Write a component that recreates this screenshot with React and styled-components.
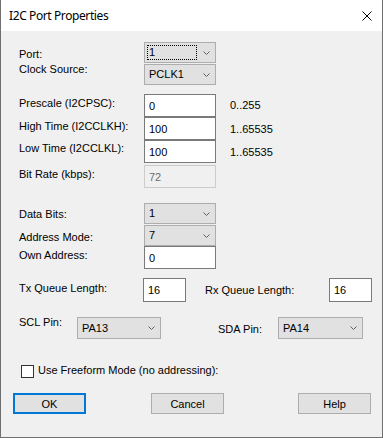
import React from 'react'
import styled, { createGlobalStyle } from 'styled-components';

const GlobalStyle = createGlobalStyle`
  body {
    margin: 0;
    background: #ffffff;
    font-family: "Liberation Sans", Arial, sans-serif;
  }
  * { box-sizing: border-box; }
`;

const Chevron = () => (
  <svg width="7" height="4" viewBox="0 0 7 4">
    <path d="M0.5 0.5 L3.5 3.5 L6.5 0.5" fill="none" stroke="#606060" strokeWidth="1" />
  </svg>
);

const CloseIcon = () => (
  <svg width="10" height="10" viewBox="0 0 10 10">
    <path d="M0.5 0.5 L9.5 9.5 M9.5 0.5 L0.5 9.5" stroke="#000" strokeWidth="1" />
  </svg>
);

const ComboBox = ({ value, width, height = 21, focus }) => (
  <Combo $w={width} $h={height} $focus={focus}>
    <ComboValue $focus={focus}>{value}</ComboValue>
    <Chevron />
  </Combo>
);

const App = () => {
  return (
    <>
      <GlobalStyle />
      <Window>
        <TitleBar>
          <Title>I2C Port Properties</Title>
          <CloseIcon />
        </TitleBar>
        <Body>
          <Row>
            <Label $w={125} $mt={6}>Port:</Label>
            <ComboBox value="1" width={72} focus />
          </Row>
          <Row $mt={1}>
            <Label $w={125} $mt={-1}>Clock Source:</Label>
            <ComboBox value="PCLK1" width={72} />
          </Row>

          <Row $mt={9}>
            <Label $w={125} $mt={3}>Prescale (I2CPSC):</Label>
            <TextBox $w={72} readOnly defaultValue="0" />
            <Hint $mt={5}>0..255</Hint>
          </Row>
          <Row>
            <Label $w={125} $mt={3}>High Time (I2CCLKH):</Label>
            <TextBox $w={72} readOnly defaultValue="100" />
            <Hint $mt={6}>1..65535</Hint>
          </Row>
          <Row>
            <Label $w={125} $mt={2}>Low Time (I2CCLKL):</Label>
            <TextBox $w={72} readOnly defaultValue="100" />
            <Hint $mt={6}>1..65535</Hint>
          </Row>
          <Row $mt={2}>
            <Label $w={125} $mt={3}>Bit Rate (kbps):</Label>
            <TextBox $w={72} disabled defaultValue="72" />
          </Row>

          <Row $mt={15}>
            <Label $w={125} $mt={5}>Data Bits:</Label>
            <ComboBox value="1" width={72} />
          </Row>
          <Row $mt={1}>
            <Label $w={125} $mt={6}>Address Mode:</Label>
            <ComboBox value="7" width={72} />
          </Row>
          <Row>
            <Label $w={125} $mt={3}>Own Address:</Label>
            <TextBox $w={72} readOnly defaultValue="0" />
          </Row>

          <Row $mt={9}>
            <Label $w={124} $mt={4}>Tx Queue Length:</Label>
            <TextBox $w={43} $h={24} readOnly defaultValue="16" />
            <Label $w={124} $ml={19} $mt={6}>Rx Queue Length:</Label>
            <TextBox $w={43} $h={24} readOnly defaultValue="16" />
          </Row>

          <Row $mt={15}>
            <Label $w={58} $mt={-1}>SCL Pin:</Label>
            <ComboBox value="PA13" width={84} height={22} />
            <Label $w={60} $ml={57} $mt={6}>SDA Pin:</Label>
            <ComboBox value="PA14" width={85} height={22} />
          </Row>

          <Row $mt={26}>
            <CheckBox />
            <Label $ml={4} $mt={-1}>Use Freeform Mode (no addressing):</Label>
          </Row>

          <ButtonRow>
            <Button $default>OK</Button>
            <Button $ml={65}>Cancel</Button>
            <Button $ml={74}>Help</Button>
          </ButtonRow>
        </Body>
      </Window>
    </>
  )
}

const Window = styled.div`
  width: 383px;
  height: 438px;
  display: flex;
  flex-direction: column;
  border: 1px solid #707070;
  border-top: none;
  background: #f0f0f0;
  font-family: "Liberation Sans", Arial, sans-serif;
  font-size: 11px;
  color: #000;
`;

const TitleBar = styled.div`
  height: 31px;
  flex: none;
  display: flex;
  align-items: center;
  justify-content: space-between;
  padding: 0 10px 0 8px;
  background: #ffffff;
`;

const Title = styled.div`
  font-family: "Segoe UI", "Noto Sans", sans-serif;
  font-size: 12px;
  letter-spacing: -0.4px;
  color: #000;
`;

const Body = styled.div`
  display: flex;
  flex-direction: column;
  padding: 11px 0 0 12px;
`;

const Row = styled.div`
  display: flex;
  align-items: flex-start;
  padding-left: 6px;
  margin-top: ${p => p.$mt || 0}px;
`;

const Label = styled.div`
  flex: none;
  width: ${p => (p.$w ? `${p.$w}px` : 'auto')};
  margin-top: ${p => p.$mt || 0}px;
  margin-left: ${p => p.$ml || 0}px;
  line-height: 13px;
  white-space: nowrap;
`;

const Hint = styled.div`
  margin-left: 14px;
  margin-top: ${p => p.$mt || 0}px;
  line-height: 13px;
`;

const TextBox = styled.input`
  flex: none;
  width: ${p => p.$w}px;
  height: ${p => p.$h || 23}px;
  margin: 0;
  padding: 0 0 0 4px;
  border: 1px solid #7a7a7a;
  background: #ffffff;
  font-family: inherit;
  font-size: 11px;
  line-height: 13px;
  color: #000;
  outline: none;

  &:disabled {
    border-color: #cccccc;
    background: #f0f0f0;
    color: #6d6d6d;
  }
`;

const Combo = styled.div`
  flex: none;
  width: ${p => p.$w}px;
  height: ${p => p.$h}px;
  display: flex;
  align-items: center;
  justify-content: space-between;
  padding: 0 5px 0 ${p => (p.$focus ? 2 : 4)}px;
  border: 1px solid #adadad;
  background: #e1e1e1;
`;

const ComboValue = styled.span`
  display: flex;
  align-items: center;
  line-height: 13px;
  ${p => p.$focus && `
    width: 50px;
    height: 15px;
    padding-left: 1px;
    border: 1px dotted #000;
  `}
`;

const CheckBox = styled.span`
  flex: none;
  width: 13px;
  height: 13px;
  margin-left: 2px;
  border: 1px solid #333333;
  background: #ffffff;
`;

const ButtonRow = styled.div`
  display: flex;
  margin-top: 15px;
`;

const Button = styled.button`
  flex: none;
  width: 73px;
  height: 21px;
  margin: 0 0 0 ${p => p.$ml || 0}px;
  padding: 0;
  border: ${p => (p.$default ? '2px solid #0078d7' : '1px solid #adadad')};
  background: #e1e1e1;
  font-family: inherit;
  font-size: 11px;
  color: #000;
`;

export default App
